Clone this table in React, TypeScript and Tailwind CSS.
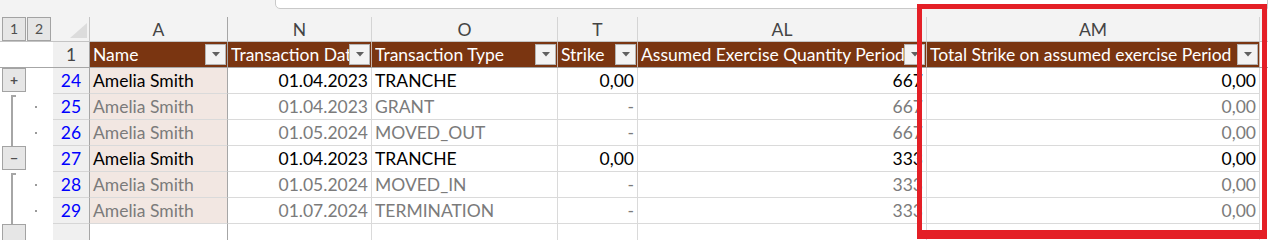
import React from "react";

type Col = { key: string; letter: string; title: string; w: string; align: "left" | "right" };

const cols: Col[] = [
  { key: "name", letter: "A", title: "Name", w: "w-[138px]", align: "left" },
  { key: "date", letter: "N", title: "Transaction Date", w: "w-[144px]", align: "right" },
  { key: "type", letter: "O", title: "Transaction Type", w: "w-[186px]", align: "left" },
  { key: "strike", letter: "T", title: "Strike", w: "w-[80px]", align: "right" },
  { key: "qty", letter: "AL", title: "Assumed Exercise Quantity Period", w: "w-[289px]", align: "right" },
  { key: "total", letter: "AM", title: "Total Strike on assumed exercise Period", w: "w-[333px]", align: "right" }
];

type Gutter = "plus" | "minus" | "start" | "line";

const rows: { n: number; main: boolean; gutter: Gutter; cells: Record<string, string> }[] = [
  { n: 24, main: true, gutter: "plus", cells: { name: "Amelia Smith", date: "01.04.2023", type: "TRANCHE", strike: "0,00", qty: "667", total: "0,00" } },
  { n: 25, main: false, gutter: "start", cells: { name: "Amelia Smith", date: "01.04.2023", type: "GRANT", strike: "-", qty: "667", total: "0,00" } },
  { n: 26, main: false, gutter: "line", cells: { name: "Amelia Smith", date: "01.05.2024", type: "MOVED_OUT", strike: "-", qty: "667", total: "0,00" } },
  { n: 27, main: true, gutter: "minus", cells: { name: "Amelia Smith", date: "01.04.2023", type: "TRANCHE", strike: "0,00", qty: "333", total: "0,00" } },
  { n: 28, main: false, gutter: "start", cells: { name: "Amelia Smith", date: "01.05.2024", type: "MOVED_IN", strike: "-", qty: "333", total: "0,00" } },
  { n: 29, main: false, gutter: "line", cells: { name: "Amelia Smith", date: "01.07.2024", type: "TERMINATION", strike: "-", qty: "333", total: "0,00" } }
];

function OutlineButton({ label, className = "" }: { label: string; className?: string }) {
  return (
    <div
      className={`flex h-[24px] w-[24px] items-center justify-center border border-[#a3a3a3] bg-[#e6e6e6] text-[14px] leading-none text-[#505050] ${className}`}
    >
      {label}
    </div>
  );
}

function FilterButton() {
  return (
    <div className="flex h-[21px] w-[21px] shrink-0 items-center justify-center border border-[#b5b5b5] bg-[#f3f3f3]">
      <svg width="8" height="5" viewBox="0 0 8 5">
        <path d="M0 0h8L4 4.5z" fill="#606060" />
      </svg>
    </div>
  );
}

function GutterCell({ kind }: { kind: Gutter }) {
  if (kind === "plus" || kind === "minus") {
    return (
      <div className="flex h-full w-[53px] shrink-0 items-start pl-[2px]">
        <OutlineButton label={kind === "plus" ? "+" : "−"} className="font-bold text-[#404040]" />
      </div>
    );
  }
  return (
    <div className="flex h-full w-[53px] shrink-0 items-stretch">
      <div
        className={`ml-[11px] w-[5px] border-l-2 border-[#a6a6a6] ${kind === "start" ? "mt-[1px] border-t-2" : ""}`}
      />
      <div className="ml-[19px] flex items-center">
        <div className="h-[2px] w-[2px] bg-[#9a9a9a]" />
      </div>
    </div>
  );
}

export default function App() {
  return (
    <div className="relative h-[240px] w-[1268px] overflow-hidden bg-white font-['Lato','Liberation_Sans',sans-serif] text-[17.5px]">
      {/* formula bar edge */}
      <div className="flex h-[17px] bg-[#f3f3f3]">
        <div className="ml-[275px] mt-[-6px] h-[15px] flex-1 rounded-bl-[5px] border border-[#c9c9c9] bg-white" />
      </div>

      {/* column letters */}
      <div className="flex h-[25px] border-b border-[#c4c4c4] bg-[#f3f3f3]">
        <div className="flex w-[53px] shrink-0 gap-[1px] pl-[2px]">
          <OutlineButton label="1" />
          <OutlineButton label="2" />
        </div>
        <div className="flex w-[37px] shrink-0 items-end justify-end border-r border-[#c4c4c4] pb-[3px] pr-[2px]">
          <svg width="17" height="15" viewBox="0 0 17 15">
            <path d="M17 0V15H0z" fill="#dcdcdc" />
          </svg>
        </div>
        {cols.map((c) => (
          <div
            key={c.key}
            className={`${c.w} flex shrink-0 items-center justify-center border-r pt-[2px] text-[#444] ${
              c.key === "name" ? "border-[#a6a6a6]" : "border-[#d4d4d4]"
            }`}
          >
            {c.letter}
          </div>
        ))}
      </div>

      {/* table header row */}
      <div className="flex h-[26px] border-b border-[#a6a6a6]">
        <div className="w-[53px] shrink-0 bg-white" />
        <div className="flex w-[37px] shrink-0 items-center justify-center border-r border-[#a6a6a6] bg-[#f0f0f0] pt-[2px] text-[#444]">
          1
        </div>
        {cols.map((c) => (
          <div
            key={c.key}
            className={`${c.w} flex shrink-0 items-center overflow-hidden border-r bg-[#7a3511] pl-[3px] pr-[1px] text-white ${
              c.key === "name" ? "border-[#a6a6a6]" : "border-[#c8b4aa]"
            }`}
          >
            <span className="min-w-0 flex-1 overflow-hidden whitespace-nowrap pt-[2px]">{c.title}</span>
            <FilterButton />
          </div>
        ))}
      </div>

      {/* data rows */}
      {rows.map((r) => (
        <div key={r.n} className="flex h-[26px]">
          <GutterCell kind={r.gutter} />
          <div className="flex w-[37px] shrink-0 items-center justify-center border-b border-r border-b-[#d6d6d6] border-r-[#a6a6a6] bg-[#f0f0f0] pt-[2px] text-[#0000ff]">
            {r.n}
          </div>
          {cols.map((c) => (
            <div
              key={c.key}
              className={`${c.w} flex shrink-0 items-center overflow-hidden whitespace-nowrap border-b border-r border-b-[#dadada] px-[3px] pt-[2px] ${
                c.align === "right" ? "justify-end" : "justify-start"
              } ${c.key === "name" ? "border-r-[#a6a6a6] bg-[#f2e7e2]" : "border-r-[#dadada]"} ${
                r.main ? "text-black" : "text-[#7b7b7b]"
              }`}
            >
              {r.cells[c.key]}
            </div>
          ))}
        </div>
      ))}

      {/* partial row */}
      <div className="flex h-[26px]">
        <div className="w-[53px] shrink-0 pl-[2px]">
          <OutlineButton label="" />
        </div>
        <div className="w-[37px] shrink-0 border-r border-[#a6a6a6] bg-[#f0f0f0]" />
        {cols.map((c) => (
          <div
            key={c.key}
            className={`${c.w} shrink-0 border-r ${c.key === "name" ? "border-[#a6a6a6]" : "border-[#dadada]"}`}
          />
        ))}
      </div>

      {/* highlight box */}
      <div className="pointer-events-none absolute left-[917px] top-[4px] h-[235px] w-[350px] border-[5px] border-b-[9px] border-[#e41f26]" />
    </div>
  );
}
